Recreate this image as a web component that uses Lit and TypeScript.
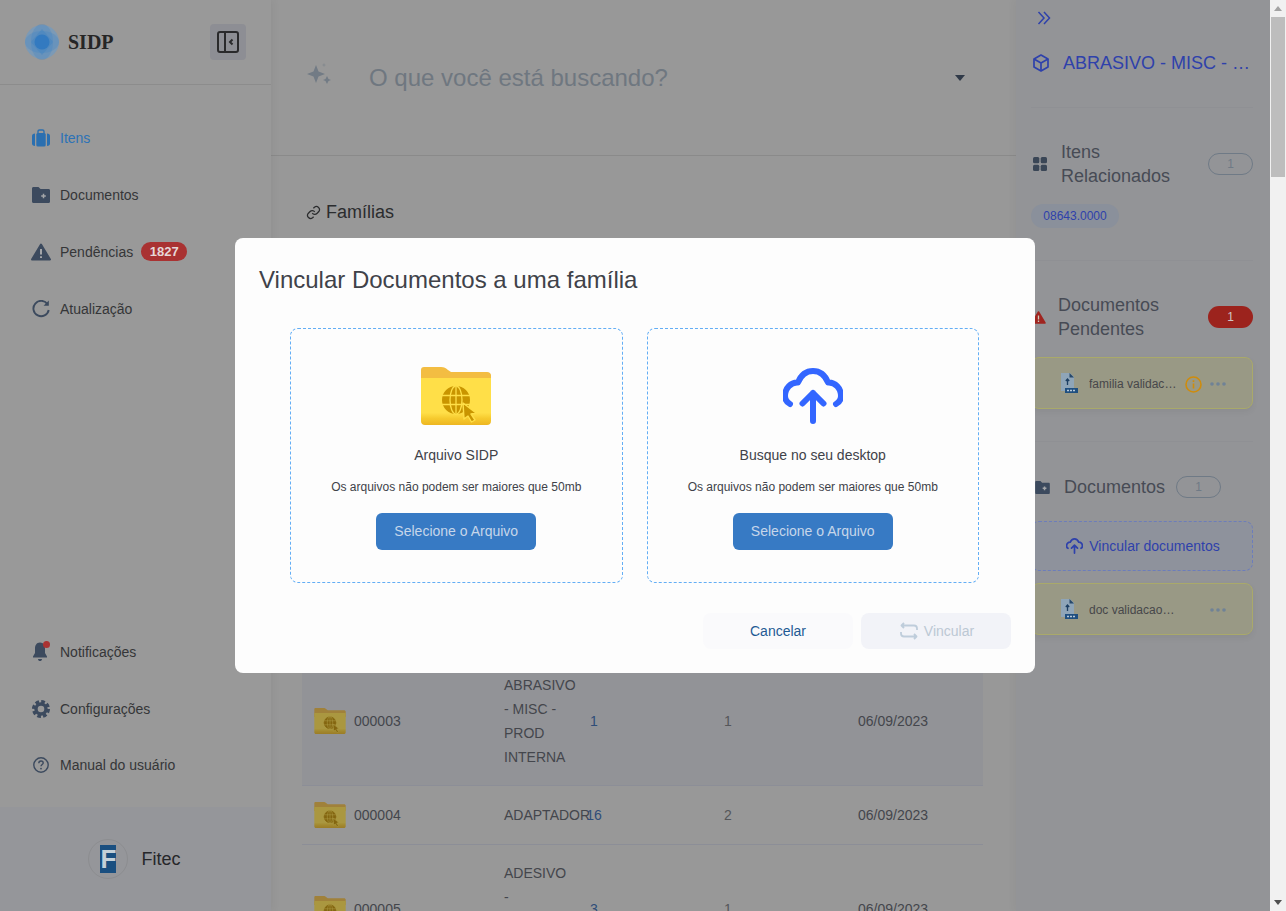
import { LitElement, html, css, svg } from "lit";
import { customElement } from "lit/decorators.js";

const cloudPath = "M7 36C3.500 34 2 31 2 28C2 20 8 14 15 14.500C18 7 23 3 30 3C37 3 42 7 45 14.500C52 14 58 20 58 28C58 31 56.500 34 53 36M30 53V25M19.500 35.500L30 25L40.500 35.500";

const folderIcon = (w: number, h: number, cls = "") => html`<svg class=${cls} width=${w} height=${h} viewBox="0 0 70 58">
  <defs><linearGradient id="fg" x1="0" y1="0" x2="0" y2="1"><stop offset="0.74" stop-color="#ffdf48"/><stop offset="0.86" stop-color="#f6ca2e"/><stop offset="1" stop-color="#edb622"/></linearGradient></defs>
  <path d="M3 0H20C23 0 25 1 27 3L30 5H66C68.500 5 70 6.500 70 8V20H0V3C0 1 1 0 3 0Z" fill="#f3bd42"/>
  <path d="M0 11H70V54C70 56.500 68.500 58 66 58H4C1.500 58 0 56.500 0 54Z" fill="url(#fg)"/>
  <g fill="none" stroke="#c99500" stroke-width="2.400">
    <circle cx="35" cy="33" r="13" fill="#c99500" stroke-width="2"/>
    <g stroke="#ffdf48" stroke-width="1.300"><ellipse cx="35" cy="33" rx="6" ry="14"/><path d="M35 20V46M21 28.500H49M21 37.500H49"/></g>
  </g>
  <path d="M42 36L55 46L50 47L54 53L50.500 55L47 49L43 52Z" fill="#c99500" stroke="#ffdf48" stroke-width="1.400" stroke-linejoin="round"/>
</svg>`;

const fileIcon = html`<svg class="file" width="18" height="20" viewBox="0 0 18 20">
  <path d="M0 0H9L13 4V18H0Z" fill="#8fa5b8"/><path d="M8.500 0L13 4.500H8.500Z" fill="#27486a"/>
  <path d="M6.500 6.500V12M4.800 8L6.500 6L8.200 8" fill="none" stroke="#1d3f63" stroke-width="1.300"/>
  <rect x="4" y="15" width="13" height="5" fill="#1f4f80"/><path d="M6 17.500H15" stroke="#b8c8d8" stroke-dasharray="2 1" stroke-width="1.500"/>
</svg>`;

const dots = html`<svg class="dots" width="16" height="4" viewBox="0 0 16 4"><circle cx="2" cy="2" r="1.800"/><circle cx="8" cy="2" r="1.800"/><circle cx="14" cy="2" r="1.800"/></svg>`;

const gearTeeth = svg`<circle cx="9" cy="9" r="7.300" fill="none" stroke="#3c4a5e" stroke-width="3.400" stroke-dasharray="3.600 2.130"/><circle cx="9" cy="9" r="5" fill="none" stroke="#3c4a5e" stroke-width="3.400"/>`;

const navIcons: Record<string, unknown> = {
  itens: html`<svg width="18" height="18" viewBox="0 0 18 18" fill="#2a6fb0"><path d="M6 4.500V2.500C6 1.500 6.700 1 7.500 1H10.500C11.300 1 12 1.500 12 2.500V4.500" fill="none" stroke="#2a6fb0" stroke-width="1.400"/><rect x="4.300" y="4" width="9.400" height="13.500" rx="1.500"/><path d="M3 4.500V17C1 17 0 16 0 14.500V7C0 5.500 1 4.500 3 4.500ZM15 4.500V17C17 17 18 16 18 14.500V7C18 5.500 17 4.500 15 4.500Z"/></svg>`,
  docs: html`<svg width="18" height="16" viewBox="0 0 18 16"><path d="M1.500 0H6.500L8.500 2H16.500C17.500 2 18 2.700 18 3.500V14.500C18 15.400 17.500 16 16.500 16H1.500C.6 16 0 15.400 0 14.500V1.500C0 .6 .6 0 1.500 0Z" fill="#3c4a5e"/><path d="M11.500 6.700V11.300M9.200 9H13.800" stroke="#a4a6a9" stroke-width="1.500"/></svg>`,
  warn: html`<svg width="20" height="18" viewBox="0 0 20 18"><path d="M10 1.500L19 16.500H1Z" fill="#3c4a5e" stroke="#3c4a5e" stroke-width="2" stroke-linejoin="round"/><path d="M10 6V11.500M10 13.200V15" stroke="#a4a6a9" stroke-width="2"/></svg>`,
  refresh: html`<svg width="18" height="18" viewBox="0 0 18 18" fill="none"><path d="M15.500 4.200A7.700 7.700 0 1 0 16.700 10" stroke="#3c4a5e" stroke-width="1.900"/><path d="M16.800 .6V5.800H11.600Z" fill="#3c4a5e"/></svg>`,
  bell: html`<svg width="18" height="21" viewBox="0 0 18 21"><path d="M8 1.500C4.500 1.500 3 4.500 3 7.500V12L1 15.500V16.500H15V15.500L13 12V7.500C13 4.500 11.500 1.500 8 1.500Z" fill="#3c4a5e"/><path d="M6 18H10C10 19.500 9 20 8 20C7 20 6 19.500 6 18Z" fill="#3c4a5e"/><circle cx="14.500" cy="3.500" r="3.500" fill="#a93232"/></svg>`,
  gear: html`<svg width="18" height="18" viewBox="0 0 18 18">${gearTeeth}</svg>`,
  help: html`<svg width="16" height="16" viewBox="0 0 16 16" fill="none" stroke="#3c4a5e"><circle cx="8" cy="8" r="7.200" stroke-width="1.400"/><path d="M5.800 6.200C5.800 4.800 6.800 4 8 4C9.300 4 10.200 4.800 10.200 6C10.200 7.500 8 7.600 8 9.300" stroke-width="1.400"/><circle cx="8" cy="11.600" r=".9" fill="#3c4a5e" stroke="none"/></svg>`,
};

@customElement("side-nav")
class SideNav extends LitElement {
  static styles = css`
    :host { display: flex; flex-direction: column; width: 271px; height: 911px; flex: none; background: #999999; box-shadow: 2px 0 8px rgba(0,0,0,.05); position: relative; z-index: 1; }
    .brand { height: 84px; border-bottom: 1px solid #8c8c8c; display: flex; align-items: center; padding: 0 25px; flex: none; }
    .logo { position: relative; width: 34px; height: 36px; margin-right: 9px; }
    .brand b { font: bold 20px "Liberation Serif", serif; color: #262626; flex: 1; }
    .toggle { width: 36px; height: 36px; border-radius: 4px; background: #8d8e94; display: flex; align-items: center; justify-content: center; }
    nav { flex: 1; display: flex; flex-direction: column; padding: 24px 0 0 31px; }
    .item { height: 57px; display: flex; align-items: center; font-size: 14px; color: #353638; }
    .item.active { color: #2c72b6; }
    .ico { width: 20px; display: flex; justify-content: center; margin-right: 9px; flex: none; }
    .badge { margin-left: 8px; background: #a93232; color: #e6d8d8; font-weight: 700; font-size: 13px; height: 19px; width: 46px; border-radius: 10px; display: flex; align-items: center; justify-content: center; }
    .bottom { padding: 0 0 14px 31px; }
    .bottom .item:last-child { height: 56px; }
    footer { height: 104px; flex: none; background: #95969a; display: flex; align-items: center; justify-content: center; gap: 13px; padding-right: 2px; box-sizing: border-box; }
    .fit { width: 40px; height: 40px; border-radius: 50%; border: 1px solid #8c8d90; box-sizing: border-box; display: flex; align-items: center; justify-content: center; }
    .fit span { width: 16px; height: 28px; background: #1a4f80; color: #c4d0d8; font: bold 26px/28px "Liberation Sans", sans-serif; text-align: center; }
    footer p { margin: 0; font-size: 18px; color: #26272a; }
  `;
  item(icon: string, label: string, active = false, badge = "") {
    return html`<div class="item ${active ? "active" : ""}"><span class="ico">${navIcons[icon]}</span>${label}${badge ? html`<span class="badge">${badge}</span>` : ""}</div>`;
  }
  render() {
    return html`
      <div class="brand">
        <svg class="logo" viewBox="0 0 34 36">
          <circle cx="17" cy="18" r="17" fill="#6f9ac2" fill-opacity=".7"/>
          <g fill="#3f86c8" fill-opacity=".3"><ellipse cx="17" cy="18" rx="17" ry="11"/><ellipse cx="17" cy="18" rx="11" ry="18"/></g>
          <path d="M17 5L28 18L17 31L6 18Z" fill="#3a80c4" fill-opacity=".35"/>
          <circle cx="17" cy="18" r="7.500" fill="#2a76c0" fill-opacity=".75"/>
        </svg>
        <b>SIDP</b>
        <div class="toggle"><svg width="22" height="22" viewBox="0 0 22 22" fill="none" stroke="#2a2a2c" stroke-width="2"><rect x="1" y="1" width="20" height="20" rx="2"/><path d="M8 1V21"/><path d="M15.500 8.500L13 11L15.500 13.500"/></svg></div>
      </div>
      <nav>
        ${this.item("itens", "Itens", true)}
        ${this.item("docs", "Documentos")}
        ${this.item("warn", "Pendências", false, "1827")}
        ${this.item("refresh", "Atualização")}
      </nav>
      <div class="bottom">
        ${this.item("bell", "Notificações")}
        ${this.item("gear", "Configurações")}
        ${this.item("help", "Manual do usuário")}
      </div>
      <footer><div class="fit"><span>F</span></div><p>Fitec</p></footer>
    `;
  }
}

const rows = [
  { code: "000003", name: "ABRASIVO - MISC - PROD INTERNA", a: "1", b: "1", date: "06/09/2023", hl: true },
  { code: "000004", name: "ADAPTADOR", a: "16", b: "2", date: "06/09/2023", hl: false },
  { code: "000005", name: "ADESIVO - ESTRUTURAL INDUSTRIAL", a: "3", b: "1", date: "06/09/2023", hl: false },
];

@customElement("main-panel")
class MainPanel extends LitElement {
  static styles = css`
    :host { display: block; flex: 1; min-width: 0; height: 911px; background: #989898; overflow: hidden; }
    .search { height: 156px; box-sizing: border-box; border-bottom: 1px solid #8a8a8a; display: flex; align-items: center; padding: 0 51px 0 35px; }
    .search .star { margin-top: -9px; }
    .search .q { margin-left: 37px; flex: 1; font-size: 24px; color: #6f7780; }
    .content { padding: 44px 33px 0 31px; }
    h2 { margin: 0 0 433px 4px; height: 24px; display: flex; align-items: center; gap: 5px; font-weight: 400; font-size: 18px; color: #2b2c2e; }
    .row { display: grid; grid-template-columns: 202px 86px 134px 134px 1fr; align-items: center; min-height: 59px; box-sizing: border-box; border-bottom: 1px solid #8c8e97; padding: 16px 0; font-size: 14px; line-height: 24px; color: #44464c; }
    .row.hl { background: #929397; }
    .code { display: flex; align-items: center; gap: 8px; padding-left: 12px; }
    .name { padding-right: 16px; }
    .a { width: 8px; display: flex; justify-content: center; color: #2f4d78; }
    .b { color: #55565a; }
    .dim { filter: brightness(.68) saturate(.85); }
  `;
  render() {
    return html`
      <div class="search">
        <svg class="star" width="26" height="22" viewBox="0 0 26 22" fill="#727b85"><path d="M10 3L12.500 9.500L19 12L12.500 14.500L10 21L7.500 14.500L1 12L7.500 9.500Z"/><path d="M21 14L22.500 17L25 18L22.500 19L21 22L19.500 19L17 18L19.500 17Z"/><path d="M18 1L18.700 2.500L20 3L18.700 3.500L18 5L17.300 3.500L16 3L17.300 2.500Z" fill-opacity=".5"/></svg>
        <div class="q">O que você está buscando?</div>
        <svg width="10" height="6" viewBox="0 0 10 6" fill="#303a48"><path d="M0 0H10L5 6Z"/></svg>
      </div>
      <div class="content">
        <h2><svg width="15" height="15" viewBox="0 0 24 24" fill="none" stroke="#2b2c2e" stroke-width="2"><path d="M10 13a5 5 0 0 0 7.500.5l3-3a5 5 0 0 0-7-7l-1.700 1.700"/><path d="M14 11a5 5 0 0 0-7.500-.5l-3 3a5 5 0 0 0 7 7l1.700-1.700"/></svg>Famílias</h2>
        ${rows.map((r) => html`<div class="row ${r.hl ? "hl" : ""}">
          <div class="code">${folderIcon(32, 26, "dim")}${r.code}</div>
          <div class="name">${r.name}</div>
          <div class="a">${r.a}</div>
          <div class="b">${r.b}</div>
          <div>${r.date}</div>
        </div>`)}
      </div>
    `;
  }
}

@customElement("detail-panel")
class DetailPanel extends LitElement {
  static styles = css`
    :host { display: block; width: 254px; flex: none; height: 911px; box-sizing: border-box; padding: 0 17px 0 15px; background: #939497; box-shadow: -2px 0 8px rgba(0,0,0,.04); color: #474b55; }
    .top { height: 107px; border-bottom: 1px solid #8f9094; }
    .collapse { height: 36px; display: flex; align-items: center; padding-left: 6px; }
    .title { margin-top: 13px; height: 28px; display: flex; align-items: center; gap: 14px; padding-left: 2px; font-size: 18px; color: #2e41ab; white-space: nowrap; }
    .title span { overflow: hidden; text-overflow: ellipsis; min-width: 0; }
    section { padding: 32px 0; border-bottom: 1px solid #8f9094; }
    section:last-child { border: 0; }
    .head { display: flex; align-items: center; font-size: 18px; line-height: 24px; }
    .head .t { flex: 1; min-width: 0; }
    .pill { flex: none; width: 45px; height: 22px; box-sizing: border-box; border-radius: 11px; border: 1px solid #6f7a86; font-size: 12px; color: #6f7a86; display: flex; align-items: center; justify-content: center; }
    .pill.red { background: #9c231d; border: 0; color: #d0c4c4; }
    .chip { margin-top: 16px; width: 88px; height: 24px; border-radius: 12px; background: #8a909b; color: #2e41ab; font-size: 12px; display: flex; align-items: center; justify-content: center; }
    .card { margin-top: 16px; height: 52px; box-sizing: border-box; border: 1px solid #a9a96a; border-radius: 8px; background: #999985; box-shadow: 0 3px 6px rgba(0,0,0,.05); display: flex; align-items: center; padding: 2px 26px 0 29px; font-size: 12px; color: #47474a; }
    .file { margin-top: -2px; flex: none; }
    .card .n { margin-left: 10px; flex: 1; min-width: 0; white-space: nowrap; overflow: hidden; text-overflow: ellipsis; }
    .card .n.fixed { flex: none; width: 86px; }
    .card .gap { flex: 1; }
    .dots { fill: #6f8296; flex: none; margin-left: 8px; }
    .info { flex: none; margin-left: 8px; }
    .link { margin-top: 22px; height: 50px; box-sizing: border-box; border: 1px dashed #6c7dbb; border-radius: 8px; background: #8e929c; display: flex; align-items: center; justify-content: center; gap: 6px; font-size: 14px; color: #2e41ab; padding-left: 2px; }
    .docs .card { margin-top: 12px; }
    .docs .head { padding: 1px 0 0 4px; }
    .docs .head svg { flex: none; margin-right: 14px; }
    .docs .t { flex: none; margin-right: 11px; }
  `;
  render() {
    return html`
      <div class="top">
        <div class="collapse"><svg width="14" height="14" viewBox="0 0 14 14" fill="none" stroke="#2e41ab" stroke-width="1.500"><path d="M1.500 1L7 7L1.500 13M7 1L12.500 7L7 13"/></svg></div>
        <div class="title">
          <svg style="flex:none" width="16" height="18" viewBox="0 0 16 18" fill="none" stroke="#2e41ab" stroke-width="1.700" stroke-linejoin="round"><path d="M8 1L15 5V13L8 17L1 13V5Z"/><path d="M1 5L8 9L15 5M8 9V17"/></svg>
          <span>ABRASIVO - MISC - PROD INTERNA</span>
        </div>
      </div>
      <section>
        <div class="head">
          <svg style="flex:none;margin:0 14px 0 2px" width="14" height="14" viewBox="0 0 14 14" fill="#3a4656"><rect width="6.300" height="6.300" rx="1.500"/><rect x="7.700" width="6.300" height="6.300" rx="1.500"/><rect y="7.700" width="6.300" height="6.300" rx="1.500"/><rect x="7.700" y="7.700" width="6.300" height="6.300" rx="1.500"/></svg>
          <div class="t">Itens Relacionados</div><div class="pill">1</div>
        </div>
        <div class="chip">08643.0000</div>
      </section>
      <section>
        <div class="head">
          <svg style="flex:none;margin:0 12px 0 0" width="15" height="13" viewBox="0 0 15 13"><path d="M7.500 1L14 12H1Z" fill="#a02520" stroke="#a02520" stroke-width="1.500" stroke-linejoin="round"/><path d="M7.500 4.500V8.500M7.500 9.500V11" stroke="#ccb" stroke-width="1.300"/></svg>
          <div class="t">Documentos Pendentes</div><div class="pill red">1</div>
        </div>
        <div class="card">${fileIcon}<span class="n">familia validacao.pdf</span>
          <svg class="info" width="17" height="17" viewBox="0 0 17 17" fill="none" stroke="#cf8c0c" stroke-width="1.600"><circle cx="8.500" cy="8.500" r="7.500"/><path d="M8.500 7.500V12.500M8.500 4.300V6"/></svg>
          ${dots}</div>
      </section>
      <section class="docs">
        <div class="head">
          <svg width="15" height="13" viewBox="0 0 18 16"><path d="M1.500 0H6.500L8.500 2H16.500C17.500 2 18 2.700 18 3.500V14.500C18 15.400 17.500 16 16.500 16H1.500C.6 16 0 15.400 0 14.500V1.500C0 .6 .6 0 1.500 0Z" fill="#3c4a5e"/><path d="M11.500 6.700V11.300M9.200 9H13.800" stroke="#a4a6a9" stroke-width="1.800"/></svg>
          <div class="t">Documentos</div><div class="pill">1</div>
        </div>
        <div class="link"><svg width="17" height="16" viewBox="0 0 60 56" fill="none" stroke="#2e41ab" stroke-width="6" stroke-linecap="round" stroke-linejoin="round"><path d=${cloudPath}/></svg>Vincular documentos</div>
        <div class="card">${fileIcon}<span class="n fixed">doc validacao final.pdf</span><span class="gap"></span>${dots}</div>
      </section>
    `;
  }
}

@customElement("link-dialog")
class LinkDialog extends LitElement {
  static styles = css`
    :host { display: block; width: 800px; height: 435px; box-sizing: border-box; background: #fdfdfd; border-radius: 8px; padding: 28px 24px 24px; color: #404249; }
    h1 { margin: 0; font-weight: 400; font-size: 24px; line-height: 28px; }
    .boxes { display: flex; gap: 24px; margin: 34px 32px 30px 31px; }
    .box { flex: 1; height: 255px; box-sizing: border-box; border: 1px dashed #63aef5; border-radius: 8px; display: flex; flex-direction: column; align-items: center; }
    .pic { display: flex; }
    .pic svg { display: block; }
    .pic.folder { margin-top: 38px; height: 65px; }
    .pic.cloud { margin-top: 39px; height: 64px; }
    .box h3 { margin: 13px 0 0; font-weight: 400; font-size: 14px; line-height: 20px; }
    .box p { margin: 14px 0 0; font-size: 12px; line-height: 16px; }
    .sel { margin-top: 18px; width: 160px; height: 37px; box-sizing: border-box; padding-bottom: 2px; border-radius: 6px; background: #377ac4; color: #c6d6ea; font-size: 14px; display: flex; align-items: center; justify-content: center; }
    .foot { display: flex; justify-content: flex-end; gap: 8px; }
    .foot div { width: 150px; height: 36px; border-radius: 8px; display: flex; align-items: center; justify-content: center; font-size: 14px; gap: 6px; }
    .cancel { background: #fafafc; color: #1f5a94; }
    .foot .go { background: #f2f3f8; color: #bcc8d4; box-sizing: border-box; padding-left: 2px; }
  `;
  render() {
    return html`
      <h1>Vincular Documentos a uma família</h1>
      <div class="boxes">
        <div class="box">
          <div class="pic folder">${folderIcon(70, 58)}</div>
          <h3>Arquivo SIDP</h3>
          <p>Os arquivos não podem ser maiores que 50mb</p>
          <div class="sel">Selecione o Arquivo</div>
        </div>
        <div class="box">
          <div class="pic cloud"><svg width="60" height="56" viewBox="0 0 60 56" fill="none" stroke="#3366ff" stroke-width="6" stroke-linecap="round" stroke-linejoin="round"><path d=${cloudPath}/></svg></div>
          <h3>Busque no seu desktop</h3>
          <p>Os arquivos não podem ser maiores que 50mb</p>
          <div class="sel">Selecione o Arquivo</div>
        </div>
      </div>
      <div class="foot">
        <div class="cancel">Cancelar</div>
        <div class="go"><svg width="18" height="18" viewBox="0 0 18 18" fill="none" stroke="#bfcddb" stroke-width="1.800" stroke-linejoin="round"><path d="M4 1L1.500 3.500L4 6M1.500 3.500H14C16 3.500 17 4.500 17 6.500V8M14 12L16.500 14.500L14 17M16.500 14.500H4C2 14.500 1 13.500 1 11.500V10"/></svg>Vincular</div>
      </div>
    `;
  }
}

@customElement("app-root")
class AppRoot extends LitElement {
  static styles = css`
    :host { display: flex; width: 1286px; height: 911px; overflow: hidden; font-family: "Liberation Sans", Arial, sans-serif; }
    .page { position: relative; display: flex; width: 1270px; height: 911px; overflow: hidden; flex: none; }
    .backdrop { position: absolute; inset: 0; z-index: 5; display: flex; align-items: center; justify-content: center; }
    .scroll { width: 16px; flex: none; height: 911px; background: #f1f1f1; display: flex; flex-direction: column; align-items: center; }
    .arrow { height: 17px; flex: none; display: flex; align-items: center; justify-content: center; }
    .thumb { width: 14px; height: 160px; background: #bdbdbd; }
    .rest { flex: 1; }
  `;
  render() {
    return html`
      <div class="page">
        <side-nav></side-nav>
        <main-panel></main-panel>
        <detail-panel></detail-panel>
        <div class="backdrop"><link-dialog></link-dialog></div>
      </div>
      <div class="scroll">
        <div class="arrow"><svg width="8" height="5" viewBox="0 0 8 5" fill="#a3a3a3"><path d="M4 0L8 5H0Z"/></svg></div>
        <div class="thumb"></div>
        <div class="rest"></div>
        <div class="arrow"><svg width="8" height="5" viewBox="0 0 8 5" fill="#505050"><path d="M0 0H8L4 5Z"/></svg></div>
      </div>
    `;
  }
}
